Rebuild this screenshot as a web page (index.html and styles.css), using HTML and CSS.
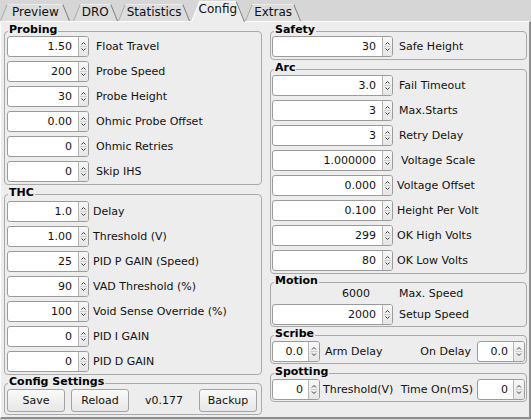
FILE: index.html
```html
<!DOCTYPE html>
<html>
<head>
<meta charset="utf-8">
<title>Config</title>
<link rel="stylesheet" href="styles.css">
</head>
<body>
<svg class="defs" aria-hidden="true">
  <defs>
    <symbol id="ud" viewBox="0 0 9 19">
      <path d="M2.5 7.5 L4.5 5.5 L6.5 7.5" fill="none" stroke="#3c3c3c" stroke-width="1"/>
      <path d="M2.5 11.5 L4.5 13.5 L6.5 11.5" fill="none" stroke="#3c3c3c" stroke-width="1"/>
      <line x1="1" y1="9.5" x2="8" y2="9.5" stroke="#cfcfcf" stroke-width="1"/>
    </symbol>
  </defs>
</svg>

<nav class="tabs">
  <span class="tab first">Preview</span>
  <span class="tab second">DRO</span>
  <span class="tab">Statistics</span>
  <span class="tab sel">Config</span>
  <span class="tab">Extras</span>
</nav>

<main class="panel">
  <div class="col">
    <section class="group">
      <div class="gtitle">Probing</div>
      <div class="rows probing">
        <div class="row"><span class="spin"><span class="val">1.50</span><span class="arr"><svg><use href="#ud"/></svg></span></span><span class="lbl">Float Travel</span></div>
        <div class="row"><span class="spin"><span class="val">200</span><span class="arr"><svg><use href="#ud"/></svg></span></span><span class="lbl">Probe Speed</span></div>
        <div class="row"><span class="spin"><span class="val">30</span><span class="arr"><svg><use href="#ud"/></svg></span></span><span class="lbl">Probe Height</span></div>
        <div class="row"><span class="spin"><span class="val">0.00</span><span class="arr"><svg><use href="#ud"/></svg></span></span><span class="lbl">Ohmic Probe Offset</span></div>
        <div class="row"><span class="spin"><span class="val">0</span><span class="arr"><svg><use href="#ud"/></svg></span></span><span class="lbl">Ohmic Retries</span></div>
        <div class="row"><span class="spin"><span class="val">0</span><span class="arr"><svg><use href="#ud"/></svg></span></span><span class="lbl">Skip IHS</span></div>
      </div>
    </section>

    <section class="group">
      <div class="gtitle">THC</div>
      <div class="rows thc">
        <div class="row"><span class="spin"><span class="val">1.0</span><span class="arr"><svg><use href="#ud"/></svg></span></span><span class="lbl">Delay</span></div>
        <div class="row"><span class="spin"><span class="val">1.00</span><span class="arr"><svg><use href="#ud"/></svg></span></span><span class="lbl">Threshold (V)</span></div>
        <div class="row"><span class="spin"><span class="val">25</span><span class="arr"><svg><use href="#ud"/></svg></span></span><span class="lbl">PID P GAIN (Speed)</span></div>
        <div class="row"><span class="spin"><span class="val">90</span><span class="arr"><svg><use href="#ud"/></svg></span></span><span class="lbl">VAD Threshold (%)</span></div>
        <div class="row"><span class="spin"><span class="val">100</span><span class="arr"><svg><use href="#ud"/></svg></span></span><span class="lbl">Void Sense Override (%)</span></div>
        <div class="row"><span class="spin"><span class="val">0</span><span class="arr"><svg><use href="#ud"/></svg></span></span><span class="lbl">PID I GAIN</span></div>
        <div class="row"><span class="spin"><span class="val">0</span><span class="arr"><svg><use href="#ud"/></svg></span></span><span class="lbl">PID D GAIN</span></div>
      </div>
    </section>

    <section class="group cfg">
      <div class="gtitle">Config Settings</div>
      <div class="btns">
        <button class="btn">Save</button>
        <button class="btn">Reload</button>
        <span class="ver">v0.177</span>
        <button class="btn">Backup</button>
      </div>
    </section>
  </div>

  <div class="col right">
    <section class="group">
      <div class="gtitle">Safety</div>
      <div class="rows safety">
        <div class="row"><span class="spin"><span class="val">30</span><span class="arr"><svg><use href="#ud"/></svg></span></span><span class="lbl">Safe Height</span></div>
      </div>
    </section>

    <section class="group">
      <div class="gtitle">Arc</div>
      <div class="rows arc">
        <div class="row"><span class="spin"><span class="val">3.0</span><span class="arr"><svg><use href="#ud"/></svg></span></span><span class="lbl">Fail Timeout</span></div>
        <div class="row"><span class="spin"><span class="val">3</span><span class="arr"><svg><use href="#ud"/></svg></span></span><span class="lbl">Max.Starts</span></div>
        <div class="row"><span class="spin"><span class="val">3</span><span class="arr"><svg><use href="#ud"/></svg></span></span><span class="lbl">Retry Delay</span></div>
        <div class="row"><span class="spin"><span class="val">1.000000</span><span class="arr"><svg><use href="#ud"/></svg></span></span><span class="lbl far">Voltage Scale</span></div>
        <div class="row"><span class="spin"><span class="val">0.000</span><span class="arr"><svg><use href="#ud"/></svg></span></span><span class="lbl near">Voltage Offset</span></div>
        <div class="row"><span class="spin"><span class="val">0.100</span><span class="arr"><svg><use href="#ud"/></svg></span></span><span class="lbl near">Height Per Volt</span></div>
        <div class="row"><span class="spin"><span class="val">299</span><span class="arr"><svg><use href="#ud"/></svg></span></span><span class="lbl near">OK High Volts</span></div>
        <div class="row"><span class="spin"><span class="val">80</span><span class="arr"><svg><use href="#ud"/></svg></span></span><span class="lbl near">OK Low Volts</span></div>
      </div>
    </section>

    <section class="group motion">
      <div class="gtitle">Motion</div>
      <div class="rows mot">
        <div class="row textrow"><span class="static">6000</span><span class="lbl">Max. Speed</span></div>
        <div class="row spinrow"><span class="spin"><span class="val">2000</span><span class="arr"><svg><use href="#ud"/></svg></span></span><span class="lbl">Setup Speed</span></div>
      </div>
    </section>

    <section class="group small">
      <div class="gtitle">Scribe</div>
      <div class="line">
        <span class="spin sm"><span class="val">0.0</span><span class="arr"><svg><use href="#ud"/></svg></span></span>
        <span class="lbl arm">Arm Delay</span>
        <span class="grow"></span>
        <span class="lbl">On Delay</span>
        <span class="spin sm end"><span class="val">0.0</span><span class="arr"><svg><use href="#ud"/></svg></span></span>
      </div>
    </section>

    <section class="group small spot">
      <div class="gtitle">Spotting</div>
      <div class="line">
        <span class="spin sm"><span class="val">0</span><span class="arr"><svg><use href="#ud"/></svg></span></span>
        <span class="lbl thr">Threshold(V)</span>
        <span class="grow"></span>
        <span class="lbl">Time On(mS)</span>
        <span class="spin sm end2"><span class="val">0</span><span class="arr"><svg><use href="#ud"/></svg></span></span>
      </div>
    </section>
  </div>
</main>
</body>
</html>
```

FILE: styles.css
```css
* { box-sizing: border-box; }

html, body { margin: 0; padding: 0; }

body {
  width: 531px;
  height: 420px;
  overflow: hidden;
  background: #d6d6d6;
  font-family: "DejaVu Sans", "Liberation Sans", sans-serif;
  font-size: 11px;
  color: #111;
}

.defs { position: absolute; width: 0; height: 0; overflow: hidden; }

/* ---------- tabs ---------- */
.tabs {
  display: flex;
  align-items: flex-start;
  height: 21px;
}

.tab {
  position: relative;
  z-index: 0;
  margin-top: 4px;
  height: 17px;
  line-height: 17px;
  padding: 0 9px;
  font-size: 12px;
  color: #111;
  white-space: nowrap;
}

.tab.first { padding: 0 12px; }
.tab.second { margin-left: 2px; }

.tab::before,
.tab::after {
  content: "";
  position: absolute;
  top: 0;
  bottom: 0;
  width: 50%;
  background: #dcdcdc;
  border-top: 1px solid #ececec;
  z-index: -1;
  transform-origin: 50% 100%;
}

.tab::before {
  left: 0;
  border-left: 1px solid #a9a9a9;
  transform: skewX(-22deg);
}

.tab::after {
  right: 0;
  border-right: 1px solid #7d7d7d;
  transform: skewX(22deg);
}

.tab.sel {
  z-index: 1;
  margin-top: 1px;
  height: 21px;
  line-height: 16px;
  padding: 0 8px;
}

.tab.sel::before,
.tab.sel::after {
  background: #ededed;
  border-top-color: #ffffff;
}

.tab.sel::before { border-left-color: #ffffff; }

/* ---------- panel ---------- */
.panel {
  height: 398px;
  background: #ededed;
  border-top: 1px solid #ffffff;
  border-left: 1px solid #ffffff;
  border-right: 2px solid #8e8e8e;
  border-bottom: 2px solid #8e8e8e;
  padding-left: 3px;
  display: grid;
  grid-template-columns: 258px 257px;
  column-gap: 8px;
  align-items: start;
}

.col { display: flex; flex-direction: column; }

.group {
  border: 1px solid #a9a9a9;
  border-radius: 4px;
  margin-top: 9px;
}

.cfg, .motion, .small { margin-top: 8px; }
.spot { margin-top: 9px; }

.gtitle {
  width: fit-content;
  margin: -9px 0 -5px 3px;
  padding: 0 1px;
  line-height: 14px;
  font-weight: bold;
  background: #ededed;
  color: #000;
}

/* ---------- rows ---------- */
.rows { padding: 2px 0 0 2px; }
.thc { padding-top: 4px; }
.right .rows { padding-left: 1px; }
.arc { padding-top: 3px; }
.mot { padding-top: 0; }

.row {
  display: flex;
  align-items: center;
  height: 25px;
}

.lbl { white-space: nowrap; }
.probing .lbl { margin-left: 7px; }
.thc .lbl { margin-left: 4px; }
.right .row .lbl { margin-left: 6px; }
.right .row .lbl.far { margin-left: 8px; }
.right .row .lbl.near { margin-left: 4px; }

.textrow { height: 20px; }
.spinrow { height: 23px; }

.static {
  width: 121px;
  text-align: right;
  padding-right: 23px;
}

/* ---------- spinbox ---------- */
.spin {
  display: flex;
  flex: none;
  width: 82px;
  height: 21px;
  border: 1px solid #9b9b9b;
  border-radius: 3px;
  background: #ffffff;
  overflow: hidden;
}

.right .spin { width: 121px; }

.val {
  flex: 1;
  text-align: right;
  padding-right: 6px;
  line-height: 19px;
  color: #111;
}

.arr {
  flex: none;
  width: 10px;
  border-left: 1px solid #b4b4b4;
  background: linear-gradient(#f7f7f7, #e6e6e6);
  display: flex;
}

.arr svg { width: 9px; height: 19px; display: block; }

.right .spin.sm { width: 48px; }
.sm .arr { width: 11px; }
.sm .arr svg { width: 10px; }
.sm .val { padding-right: 5px; }

/* ---------- scribe / spotting lines ---------- */
.line {
  display: flex;
  align-items: center;
  padding: 5px 1px 1px 1px;
}

.grow { flex: 1; }
.arm { margin-left: 5px; }
.thr { margin-left: 3px; }
.end { margin-left: 6px; }
.end2 { margin-left: 4px; }

/* ---------- buttons ---------- */
.btns {
  display: flex;
  align-items: center;
  padding: 5px 0 2px 2px;
}

.btn {
  width: 58px;
  height: 23px;
  padding: 0;
  border: 1px solid #a2a2a2;
  border-radius: 3px;
  background: linear-gradient(#fafafa, #e7e7e7);
  font: inherit;
  color: #111;
  display: flex;
  align-items: center;
  justify-content: center;
}

.btn + .btn { margin-left: 6px; }

.ver {
  width: 70px;
  text-align: center;
}
```
